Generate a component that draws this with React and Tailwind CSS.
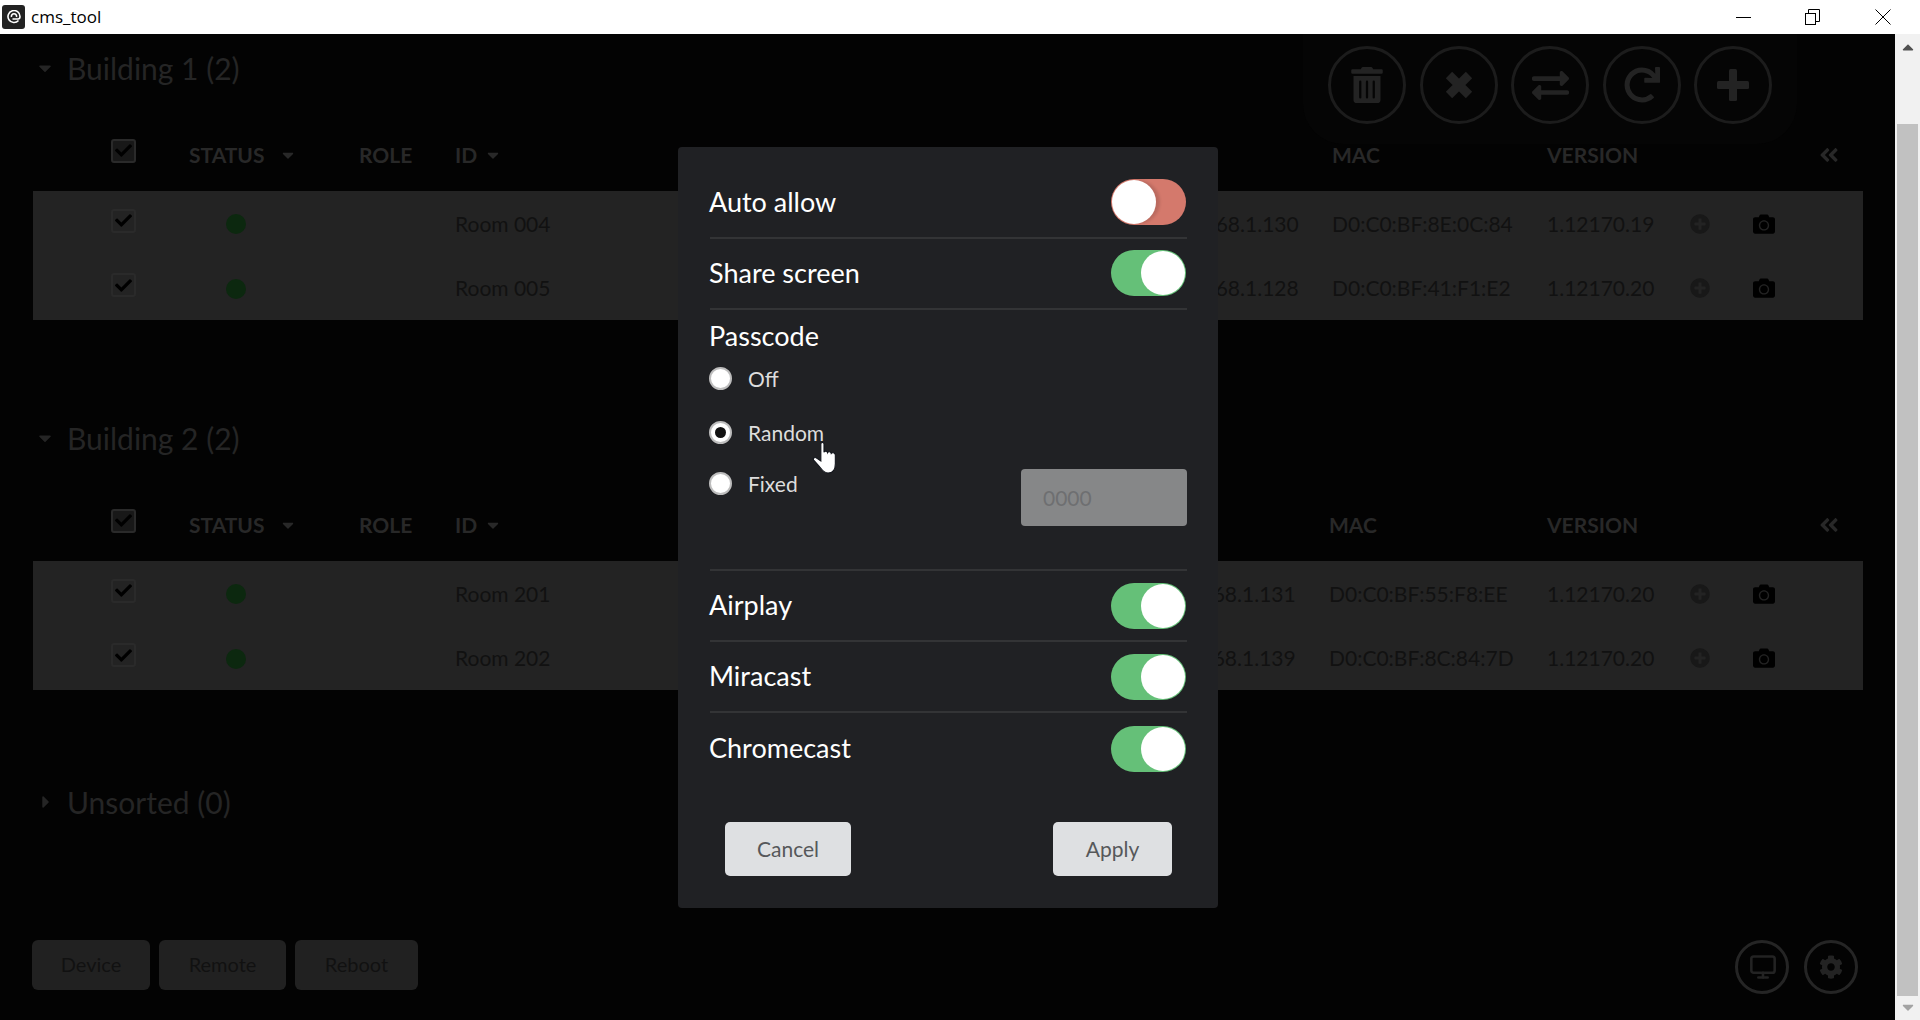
import { FaTrashAlt, FaExchangeAlt, FaRedo, FaCheck, FaPlusCircle, FaCamera, FaAngleDoubleLeft, FaCog, FaCaretDown, FaCaretRight, FaCaretUp } from 'react-icons/fa'
import { Monitor } from 'lucide-react'

const buildingOne = [
  { room: 'Room 004', ip: '192.168.1.130', mac: 'D0:C0:BF:8E:0C:84', version: '1.12170.19' },
  { room: 'Room 005', ip: '192.168.1.128', mac: 'D0:C0:BF:41:F1:E2', version: '1.12170.20' },
]

const buildingTwo = [
  { room: 'Room 201', ip: '192.168.1.131', mac: 'D0:C0:BF:55:F8:EE', version: '1.12170.20' },
  { room: 'Room 202', ip: '192.168.1.139', mac: 'D0:C0:BF:8C:84:7D', version: '1.12170.20' },
]

const CheckBox = ({ className }) => (
  <div className={`w-[25px] h-[24px] rounded-[3px] border-2 border-[#2a2a2a] flex items-center justify-center text-black ${className}`}>
    <FaCheck size={17} />
  </div>
)

const SectionTitle = ({ open = true, children }) => (
  <div className="flex items-center pl-[35px] h-[70px] pb-[2px] shrink-0">
    <div className="w-[32px] text-[#252525]">
      {open ? <FaCaretDown size={20} /> : <FaCaretRight size={20} className="ml-[1px]" />}
    </div>
    <h2 className="text-[30px] leading-none text-[#252525]">{children}</h2>
  </div>
)

const Table = ({ rows, idCol, ipCol, macCol }) => (
  <div>
    <div className="flex items-center h-[87px] pt-[15px] pl-[33px] text-[21px] font-bold text-[#282828]">
      <div className="w-[156px] pl-[78px]">
        <CheckBox className="mb-[9px] bg-[#181818]" />
      </div>
      <div className="w-[170px] flex items-center">
        STATUS
        <FaCaretDown size={18} className="ml-[15px]" />
      </div>
      <div className="w-[96px]">ROLE</div>
      <div className={`flex items-center ${idCol}`}>
        ID
        <FaCaretDown size={18} className="ml-[7px]" />
      </div>
      <div className={ipCol}>IP</div>
      <div className={macCol}>MAC</div>
      <div className="w-[273px]">VERSION</div>
      <FaAngleDoubleLeft size={22} className="-ml-[2px]" />
    </div>
    <div className="ml-[33px] w-[1830px] bg-[#232323] text-[21px] text-[#111111]">
      {rows.map((r) => (
        <div key={r.room} className="flex items-center h-[64px] first:h-[65px]">
          <div className="w-[156px] pl-[78px]">
            <CheckBox className="mb-[6px]" />
          </div>
          <div className="w-[170px] pl-[37px]">
            <div className="w-[20px] h-[20px] mt-[1px] rounded-full bg-[#0c280f]" />
          </div>
          <div className="w-[96px]" />
          <div className={idCol}>{r.room}</div>
          <div className={ipCol}>{r.ip}</div>
          <div className={macCol}>{r.mac}</div>
          <div className="w-[143px]">{r.version}</div>
          <div className="w-[63px] flex">
            <FaPlusCircle size={20} className="text-[#181818]" />
          </div>
          <FaCamera size={22} className="text-black" />
        </div>
      ))}
    </div>
  </div>
)

const Toggle = ({ on }) => (
  <div className={`w-[75px] h-[46px] rounded-full p-[1px] flex shrink-0 ${on ? 'bg-[#65c078] justify-end' : 'bg-[#d4796c] justify-start'}`}>
    <div className={`w-[44px] h-[44px] rounded-full bg-white ${on ? '' : 'shadow-[4px_0_3px_rgba(0,0,0,0.12)]'}`} />
  </div>
)

const ToggleRow = ({ label, on, last, className = '' }) => (
  <div className={`flex items-center justify-between h-[71px] pr-[1px] ${last ? '' : 'border-b-2 border-[#333436]'} ${className}`}>
    <span className="-ml-[1px] text-[27px] text-white">{label}</span>
    <Toggle on={on} />
  </div>
)

const Radio = ({ label, selected, className }) => (
  <div className={`-ml-[1px] flex items-center gap-[16px] text-[21px] text-[#dddddd] ${className}`}>
    <div className="w-[23px] h-[23px] rounded-full bg-white border-2 border-[#bdbdbd] flex items-center justify-center">
      {selected && <div className="w-[11px] h-[11px] rounded-full bg-[#111111]" />}
    </div>
    {label}
  </div>
)

const RoundButton = ({ children, className }) => (
  <div className={`rounded-full border-[3px] border-[#1c1c1c] flex items-center justify-center text-[#232323] shrink-0 ${className}`}>
    {children}
  </div>
)

export default function App() {
  return (
    <div className="h-screen flex flex-col overflow-hidden bg-black font-['Lato',sans-serif]">
      {/* Title bar */}
      <div className="h-[34px] shrink-0 bg-white flex items-center pl-[2px] text-black">
        <div className="w-[23px] h-[24px] rounded-[3px] bg-[#222222] flex items-center justify-center">
          <svg width="14" height="14" viewBox="0 0 14 14" fill="none" stroke="white" strokeWidth="1.6">
            <path d="M11.5 10.5A6 6 0 1 1 13 6.5c0 1.5-1 2.5-2 2.5H5.5" />
            <path d="M4.5 7a2.6 2.6 0 1 1 5 0" />
          </svg>
        </div>
        <span className="ml-[6px] text-[17px] font-['Open_Sans',sans-serif]">cms_tool</span>
        <div className="ml-auto flex items-center pr-[29px]">
          <div className="w-[15px] h-[1px] bg-black" />
          <svg width="15" height="16" viewBox="0 0 15 16" fill="none" stroke="black" className="ml-[54px]">
            <rect x="0.5" y="4.5" width="10" height="11" />
            <path d="M3.5 4.5V0.5H14.5V12.5H10.5" />
          </svg>
          <svg width="16" height="16" viewBox="0 0 16 16" fill="none" stroke="black" className="ml-[55px]">
            <path d="M0.5 0.5L15.5 15.5M15.5 0.5L0.5 15.5" />
          </svg>
        </div>
      </div>

      <div className="flex-1 flex min-h-0">
        {/* Page behind the dialog */}
        <div className="relative flex-1 bg-[#030303] flex flex-col min-w-0">
          <section className="relative">
            <div className="flex items-start h-[70px]">
              <SectionTitle>Building 1 (2)</SectionTitle>
              <div className="ml-auto mr-[98px] h-[110px] px-[25px] pt-[12px] bg-[#050505] rounded-b-[40px] flex gap-[13.5px]">
                <RoundButton className="w-[78px] h-[78px]"><FaTrashAlt size={36} /></RoundButton>
                <RoundButton className="w-[78px] h-[78px]">
                  <svg width="30" height="28" viewBox="0 0 30 28" fill="none" stroke="currentColor" strokeWidth="9">
                    <path d="M5 4L25 24M25 4L5 24" />
                  </svg>
                </RoundButton>
                <RoundButton className="w-[78px] h-[78px]"><FaExchangeAlt size={37} /></RoundButton>
                <RoundButton className="w-[78px] h-[78px]"><FaRedo size={36} /></RoundButton>
                <RoundButton className="w-[78px] h-[78px]">
                  <svg width="32" height="32" viewBox="0 0 32 32" fill="currentColor">
                    <rect x="12" width="8" height="32" rx="1.5" />
                    <rect y="12" width="32" height="8" rx="1.5" />
                  </svg>
                </RoundButton>
              </div>
            </div>
            <Table rows={buildingOne} idCol="w-[707px]" ipCol="w-[170px]" macCol="w-[215px]" />
          </section>

          <section className="mt-[84px]">
            <SectionTitle>Building 2 (2)</SectionTitle>
            <Table rows={buildingTwo} idCol="w-[704px]" ipCol="w-[170px]" macCol="w-[218px]" />
          </section>

          <section className="mt-[78px]">
            <SectionTitle open={false}>Unsorted (0)</SectionTitle>
          </section>

          <div className="mt-[102px] flex items-start pl-[32px] pr-[37px]">
            <div className="flex gap-[9px] text-[20px] text-[#111111]">
              <div className="w-[118px] h-[50px] pb-[2px] rounded-[6px] bg-[#212121] flex items-center justify-center">Device</div>
              <div className="w-[127px] h-[50px] pb-[2px] rounded-[6px] bg-[#212121] flex items-center justify-center">Remote</div>
              <div className="w-[123px] h-[50px] pb-[2px] rounded-[6px] bg-[#212121] flex items-center justify-center">Reboot</div>
            </div>
            <div className="ml-auto flex gap-[15px]">
              <RoundButton className="w-[54px] h-[54px] border-[#252525] text-[#2a2a2a]"><Monitor size={28} strokeWidth={2.2} className="ml-[2px]" /></RoundButton>
              <RoundButton className="w-[54px] h-[54px] border-[#252525] text-[#2a2a2a]"><FaCog size={24} /></RoundButton>
            </div>
          </div>

          {/* Dialog */}
          <div className="absolute left-[678px] top-[113px] w-[540px] h-[761px] bg-[#202124] rounded-[4px] pl-[32px] pr-[31px]">
            <div className="pt-[21px]">
              <ToggleRow label="Auto allow" on={false} className="pb-[1px]" />
              <ToggleRow label="Share screen" on className="pb-[1px]" />
            </div>
            <div className="h-[261px] border-b-2 border-[#333436] relative">
              <div className="-ml-[1px] text-[27px] text-white pt-[7px] leading-[38px]">Passcode</div>
              <Radio label="Off" className="mt-[12px] h-[23px]" />
              <Radio label="Random" selected className="mt-[31px] h-[23px]" />
              <Radio label="Fixed" className="mt-[28px] h-[23px]" />
              <div className="absolute right-0 top-[159px] w-[166px] h-[57px] rounded-[4px] bg-[#868788] text-[#6e6f71] text-[21px] flex items-center pl-[22px]">0000</div>
            </div>
            <ToggleRow label="Airplay" on />
            <ToggleRow label="Miracast" on />
            <ToggleRow label="Chromecast" on last />
            <div className="flex justify-between mt-[38px] pl-[15px] pr-[15px]">
              <div className="w-[126px] h-[54px] rounded-[5px] bg-[#dee0e2] text-[#56585a] text-[21px] flex items-center justify-center">Cancel</div>
              <div className="w-[119px] h-[54px] rounded-[5px] bg-[#dee0e2] text-[#56585a] text-[21px] flex items-center justify-center">Apply</div>
            </div>
          </div>

          {/* Mouse pointer */}
          <svg width="28" height="34" viewBox="0 0 26 33" className="absolute left-[811px] top-[407px]">
            <path
              d="M9 3C9 .8 12 .8 12 3V11C12.5 9.6 15 9.6 15.4 11.4C16 10 18.6 10 19 12C19.6 11 22.6 11 23 13.5V22C23 27 21.5 31 16 31C11.5 31 9.5 27 7 24L2 18.5C.8 17 2.8 15.4 4.5 16.4L9 19.5Z"
              fill="white"
              stroke="#10131a"
              strokeWidth="1"
            />
          </svg>
        </div>

        {/* Scrollbar */}
        <div className="w-[25px] shrink-0 bg-[#f1f1f1] flex flex-col items-center">
          <FaCaretUp size={18} className="text-[#505050] mt-[4px] h-[18px]" />
          <div className="mt-[68px] w-[21px] h-[872px] bg-[#c1c1c1]" />
          <FaCaretDown size={18} className="text-[#a3a3a3] mt-[2px]" />
        </div>
      </div>
    </div>
  )
}
